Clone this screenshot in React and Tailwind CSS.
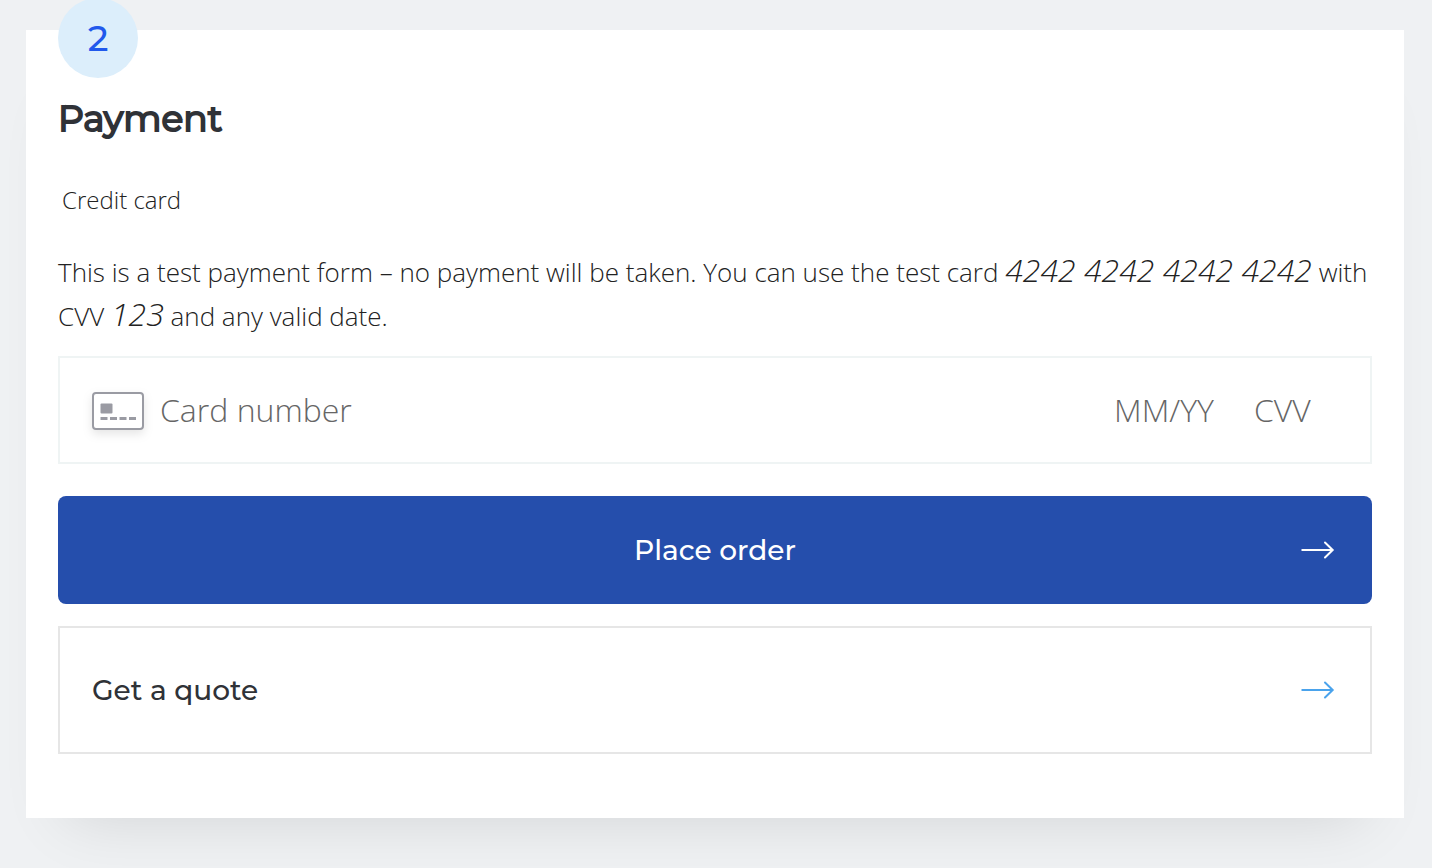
function Arrow({ className }) {
  return (
    <svg className={className} width="34" height="18" viewBox="0 0 34 18" fill="none" stroke="currentColor" strokeWidth="2" aria-hidden="true">
      <path d="M0.5 9H32" />
      <path d="M24 1.5L31.7 9L24 16.5" strokeLinecap="round" />
    </svg>
  );
}

function CardIcon() {
  return (
    <svg className="shrink-0 drop-shadow-[0_4px_5px_rgba(0,0,0,0.1)]" width="52" height="40" viewBox="0 0 52 40" aria-hidden="true">
      <rect x="1" y="3" width="50" height="36" rx="3" fill="#fff" stroke="#9a9ba3" strokeWidth="2" />
      <rect x="8.5" y="13.5" width="12" height="10" rx="1" fill="#9a9ba3" />
      <path d="M8.5 28.5h7M18 28.5h7M27.5 28.5h7M37 28.5h7" stroke="#9a9ba3" strokeWidth="3" />
    </svg>
  );
}

const fieldClass =
  "h-12 min-w-0 bg-transparent text-[32px] font-light outline-none placeholder:text-[#666666] placeholder:opacity-100";

export default function App() {
  return (
    <main className="min-h-screen bg-[#eff1f3] pt-[30px] pr-7 pb-[50px] pl-[26px] font-['Open_Sans','Noto_Sans',sans-serif] font-light text-[#222222]">
      <section className="flex flex-col bg-white px-8 pb-16 shadow-[0_40px_60px_-40px_rgba(0,0,0,0.12)]">
        <div className="-mt-8 flex size-20 items-center justify-center rounded-full bg-[#dceefb] pb-px font-['Montserrat','Inter',sans-serif] text-[36px] font-medium text-[#2159ec]">
          2
        </div>
        <h2 className="mt-4 font-['Montserrat','Inter',sans-serif] text-[36px] leading-12 font-normal text-[#2f3237] [-webkit-text-stroke:2px_#2f3237]">Payment</h2>
        <form className="flex flex-col" onSubmit={(event) => event.preventDefault()}>
          <h3 className="mt-10 px-1 text-2xl leading-9">Credit card</h3>
          <p className="mt-8 text-[26px] leading-11">
            This is a test payment form – no payment will be taken. You can use the test card{" "}
            <em className="text-[32px] leading-none">4242 4242 4242 4242</em> with CVV{" "}
            <em className="text-[32px] leading-none">123</em> and any valid date.
          </p>
          <div className="mt-[18px] flex h-27 items-center border-2 border-[#eff4f4] px-8">
            <CardIcon />
            <input className={`${fieldClass} ml-4 flex-1`} aria-label="Card number" placeholder="Card number" inputMode="numeric" />
            <input className={`${fieldClass} w-[140px]`} aria-label="Expiry date" placeholder="MM/YY" />
            <input className={`${fieldClass} w-[84px]`} aria-label="CVV" placeholder="CVV" />
          </div>
          <button type="submit" className="mt-8 grid h-27 grid-cols-[1fr_auto_1fr] items-center rounded-lg bg-[#254eac] px-[37px] font-['Montserrat','Inter',sans-serif] text-[28px] font-medium text-white">
            <span className="col-start-2">Place order</span>
            <Arrow className="justify-self-end" />
          </button>
          <button type="button" className="mt-[22px] flex h-32 items-center justify-between border-2 border-[#e6e6e6] pr-[35px] pl-8 font-['Montserrat','Inter',sans-serif] text-[28px] font-medium text-[#2f3237]">
            <span>Get a quote</span>
            <Arrow className="text-[#4aa3ec]" />
          </button>
        </form>
      </section>
    </main>
  );
}
